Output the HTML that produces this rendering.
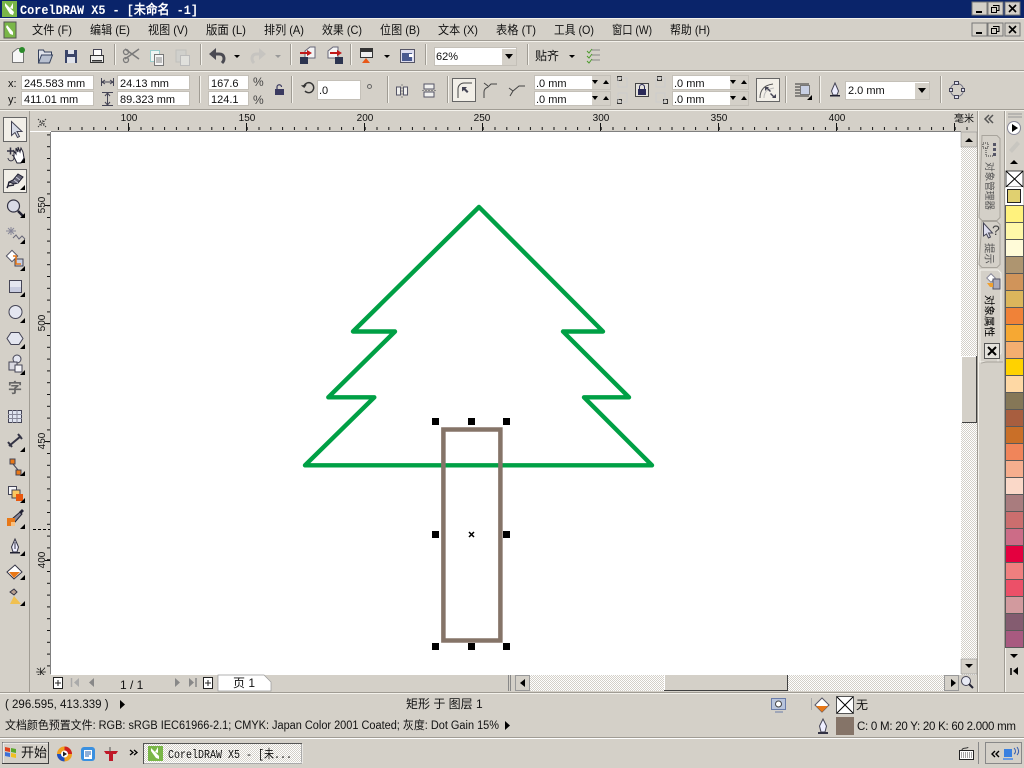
<!DOCTYPE html>
<html><head><meta charset="utf-8"><style>
html,body{margin:0;padding:0;width:1024px;height:768px;overflow:hidden;background:#d4d0c8}
svg{display:block;position:absolute;left:0;top:0}
text{font-family:"Liberation Sans","WenQuanYi Zen Hei","Noto Sans CJK SC",sans-serif;font-size:11px;fill:#111}
.m{font-size:12px;fill:#111}
.r{font-size:10px;text-anchor:middle;fill:#111}
.box{fill:#fff;stroke:#c4c0b8}
.sep{stroke:#a09c94;stroke-width:1}
.sepl{stroke:#f4f2ec;stroke-width:1}
.tb{fill:#000}
</style></head><body>
<svg width="1024" height="768" viewBox="0 0 1024 768" xmlns="http://www.w3.org/2000/svg">
<defs>
<pattern id="d" width="2" height="2" patternUnits="userSpaceOnUse"><rect width="2" height="2" fill="#fff"/><rect width="1" height="1" fill="#d4d0c8"/><rect x="1" y="1" width="1" height="1" fill="#d4d0c8"/></pattern>
<pattern id="hminor" x="128.7" y="112" width="11.8" height="20" patternUnits="userSpaceOnUse"><rect x="0" y="15" width="1" height="3" fill="#111"/></pattern>
<pattern id="vminor" x="30" y="205.2" width="21" height="11.8" patternUnits="userSpaceOnUse"><rect x="17" y="0" width="3" height="1" fill="#111"/></pattern>
</defs>
<rect width="1024" height="768" fill="#d4d0c8"/>

<!-- title bar -->
<rect width="1024" height="18" fill="#0a246a"/>
<rect x="2" y="1" width="15" height="16" fill="#7ab648"/>
<path d="M5 3l9 9-1 3-3-1-5-8z" fill="#fff"/><path d="M13 3l-3 5 3 1z" fill="#fff"/>
<text x="20" y="14" textLength="178" lengthAdjust="spacingAndGlyphs" style="font:bold 13px 'Liberation Mono','WenQuanYi Zen Hei',monospace;fill:#fff">CorelDRAW X5 - [未命名 -1]</text>
<g id="wb">
<rect x="972" y="2" width="15" height="13" fill="#d4d0c8" stroke="#777"/><rect x="976" y="11" width="6" height="2" fill="#000"/>
<rect x="988" y="2" width="15" height="13" fill="#d4d0c8" stroke="#777"/><path d="M993 5.500h6v5h-2M991.500 7.500h5v5h-5z" fill="none" stroke="#000"/>
<rect x="1005" y="2" width="15" height="13" fill="#d4d0c8" stroke="#777"/><path d="M1009 5l7 7M1016 5l-7 7" stroke="#000" stroke-width="1.6"/>
</g>
<use href="#wb" y="21"/>
<rect y="18" width="1024" height="1" fill="#f4f2ec"/>

<!-- menu -->
<rect x="4" y="22" width="12" height="16" fill="#7ab648" stroke="#555"/><path d="M7 25l6 7v3l-3-1-4-7z" fill="#fff"/>
<text class="m" x="32" y="34" textLength="40" lengthAdjust="spacingAndGlyphs">文件 (F)</text>
<text class="m" x="90" y="34" textLength="40" lengthAdjust="spacingAndGlyphs">编辑 (E)</text>
<text class="m" x="148" y="34" textLength="40" lengthAdjust="spacingAndGlyphs">视图 (V)</text>
<text class="m" x="206" y="34" textLength="40" lengthAdjust="spacingAndGlyphs">版面 (L)</text>
<text class="m" x="264" y="34" textLength="40" lengthAdjust="spacingAndGlyphs">排列 (A)</text>
<text class="m" x="322" y="34" textLength="40" lengthAdjust="spacingAndGlyphs">效果 (C)</text>
<text class="m" x="380" y="34" textLength="40" lengthAdjust="spacingAndGlyphs">位图 (B)</text>
<text class="m" x="438" y="34" textLength="40" lengthAdjust="spacingAndGlyphs">文本 (X)</text>
<text class="m" x="496" y="34" textLength="40" lengthAdjust="spacingAndGlyphs">表格 (T)</text>
<text class="m" x="554" y="34" textLength="40" lengthAdjust="spacingAndGlyphs">工具 (O)</text>
<text class="m" x="612" y="34" textLength="40" lengthAdjust="spacingAndGlyphs">窗口 (W)</text>
<text class="m" x="670" y="34" textLength="40" lengthAdjust="spacingAndGlyphs">帮助 (H)</text>
<rect y="40" width="1024" height="1" fill="#a09c94"/><rect y="41" width="1024" height="1" fill="#f4f2ec"/>

<!-- standard toolbar -->
<path d="M12.500 52.500l5-4h6v14h-11z" fill="#f6f6f6" stroke="#777"/><circle cx="22" cy="50" r="3" fill="#2a8a2a"/>
<path d="M38.500 63V50h5l1 2h7v3" fill="#dfe2ea" stroke="#34405c"/><path d="M38.500 63l3-8h11l-3 8z" fill="#b8c0d0" stroke="#34405c"/>
<rect x="65" y="50" width="12" height="13" fill="#3a4468"/><rect x="68" y="50" width="6" height="4" fill="#dfe2ea"/><rect x="67" y="57" width="8" height="6" fill="#dfe2ea"/>
<rect x="93.500" y="49.500" width="8" height="6" fill="#fff" stroke="#445"/><rect x="90.500" y="55.500" width="13" height="7" fill="#eee" stroke="#333"/><rect x="92" y="60" width="10" height="1.500" fill="#333"/>
<line class="sep" x1="114.500" y1="44" x2="114.500" y2="65"/><line class="sepl" x1="115.500" y1="44" x2="115.500" y2="65"/>
<path d="M125 49l14 10M139 49l-14 10" stroke="#7a7a7a" stroke-width="1.500" fill="none"/><circle cx="126" cy="52" r="2.500" fill="none" stroke="#7a7a7a" stroke-width="1.300"/><circle cx="126" cy="60" r="2.500" fill="none" stroke="#7a7a7a" stroke-width="1.300"/>
<rect x="150.500" y="50.500" width="9" height="11" fill="#eef4f2" stroke="#9cc"/><rect x="154.500" y="54.500" width="9" height="11" fill="#f4f4f4" stroke="#777"/><path d="M156 58h6M156 60h6M156 62h6" stroke="#888"/>
<rect x="176" y="50" width="10" height="12" fill="#d0d0cc" stroke="#c0c0bc"/><rect x="180.500" y="55.500" width="9" height="10" fill="#e0e0dc" stroke="#bbb"/>
<line class="sep" x1="200.500" y1="44" x2="200.500" y2="65"/><line class="sepl" x1="201.500" y1="44" x2="201.500" y2="65"/>
<path d="M222 63c3-3 3-9-3-9h-5" fill="none" stroke="#4a4a52" stroke-width="3"/><path d="M216 48l-7 6 7 6z" fill="#4a4a52"/>
<path d="M234 55h6l-3 3z" fill="#000"/>
<path d="M254 63c-3-3-3-9 3-9h4" fill="none" stroke="#c6c4c0" stroke-width="3"/><path d="M259 48l7 6-7 6z" fill="#c6c4c0"/>
<path d="M275 55h6l-3 3z" fill="#999"/>
<line class="sep" x1="290.500" y1="44" x2="290.500" y2="65"/><line class="sepl" x1="291.500" y1="44" x2="291.500" y2="65"/>
<path d="M305 51l5-4h5v11h-10z" fill="#f4f4f4" stroke="#667"/><rect x="300" y="57" width="8" height="7" fill="#2c3450"/><path d="M300 52h7v-2l5 3-5 3v-2h-7z" fill="#c01818"/>
<path d="M328 51l5-4h5v11h-10z" fill="#f4f4f4" stroke="#667"/><rect x="335" y="57" width="8" height="7" fill="#2c3450"/><path d="M330 52h7v-2l5 3-5 3v-2h-7z" fill="#c01818"/>
<line class="sep" x1="350.500" y1="44" x2="350.500" y2="65"/><line class="sepl" x1="351.500" y1="44" x2="351.500" y2="65"/>
<rect x="360.500" y="48.500" width="12" height="9" fill="#eee" stroke="#333"/><rect x="361" y="49" width="11" height="3" fill="#333"/><path d="M362 63l4-5 4 5z" fill="#e85818"/>
<path d="M384 55h6l-3 3z" fill="#000"/>
<rect x="400.500" y="49.500" width="14" height="13" fill="#dde" stroke="#556"/><rect x="402" y="53" width="10" height="8" fill="#4a5a90"/><rect x="409" y="54" width="4" height="3" fill="#fff"/>
<line class="sep" x1="425.500" y1="44" x2="425.500" y2="65"/><line class="sepl" x1="426.500" y1="44" x2="426.500" y2="65"/>
<rect class="box" x="434.500" y="47.500" width="82" height="18"/><rect x="502" y="49" width="14" height="16" fill="#d4d0c8"/><path d="M505 54h8l-4 5z" fill="#000"/>
<text x="436" y="60">62%</text>
<line class="sep" x1="527.500" y1="44" x2="527.500" y2="65"/><line class="sepl" x1="528.500" y1="44" x2="528.500" y2="65"/>
<text class="m" x="535" y="60">贴齐</text>
<path d="M569 55h6l-3 3z" fill="#000"/>
<path d="M592 50h8M592 55h8M592 60h8" stroke="#888"/><path d="M587 51l2 2 3-4M587 56l2 2 3-4M587 61l2 2 3-4" stroke="#4a9a2a" fill="none"/>
<rect y="70" width="1024" height="1" fill="#a09c94"/><rect y="71" width="1024" height="1" fill="#f4f2ec"/>

<!-- property bar -->
<text x="8" y="87">x:</text><text x="8" y="103">y:</text>
<rect class="box" x="21.500" y="75.500" width="72" height="14"/><rect class="box" x="21.500" y="91.500" width="72" height="14"/>
<text x="24" y="87">245.583 mm</text><text x="24" y="103">411.01 mm</text>
<path d="M101.500 78v8M113.500 78v8M102 82h11M105 80l-3 2 3 2M110 80l3 2-3 2" fill="none" stroke="#445"/>
<path d="M102 92.500h11M102 105.500h11M107.500 93v12M105 96l2.500-3 2.500 3M105 102l2.500 3 2.500-3" fill="none" stroke="#445"/>
<rect class="box" x="117.500" y="75.500" width="72" height="14"/><rect class="box" x="117.500" y="91.500" width="72" height="14"/>
<text x="120" y="87">24.13 mm</text><text x="120" y="103">89.323 mm</text>
<line class="sep" x1="199.500" y1="76" x2="199.500" y2="103"/><line class="sepl" x1="200.500" y1="76" x2="200.500" y2="103"/>
<rect class="box" x="208.500" y="75.500" width="40" height="14"/><rect class="box" x="208.500" y="91.500" width="40" height="14"/>
<text x="211" y="87">167.6</text><text x="211" y="103">124.1</text>
<text x="253" y="86" style="font-size:12px;fill:#444">%</text><text x="253" y="104" style="font-size:12px;fill:#444">%</text>
<rect x="275" y="89" width="9" height="6" fill="#3a3a60"/><path d="M277 89v-2a2.200 2.200 0 0 1 4.500 0" fill="none" stroke="#3a3a60" stroke-width="1.200"/>
<line class="sep" x1="291.500" y1="76" x2="291.500" y2="103"/><line class="sepl" x1="292.500" y1="76" x2="292.500" y2="103"/>
<path d="M304 86a5 5 0 1 1 1 5" fill="none" stroke="#333" stroke-width="1.400"/><path d="M301 85h6l-3 3z" fill="#333" transform="rotate(-10 304 86)"/>
<rect class="box" x="317.500" y="80.500" width="43" height="19"/><text x="319" y="94">.0</text>
<circle cx="369.500" cy="86.500" r="2" fill="none" stroke="#666"/>
<line class="sep" x1="387.500" y1="76" x2="387.500" y2="103"/><line class="sepl" x1="388.500" y1="76" x2="388.500" y2="103"/>
<path d="M396.500 87v8h4v-8zM403.500 87v8h4v-8z" fill="#f0f0ee" stroke="#556"/><path d="M402 84v14" stroke="#888" stroke-dasharray="2 1"/>
<path d="M424 84h10v5h-10zM424 92h10v5h-10z" fill="#f0f0ee" stroke="#556"/><path d="M422 90.500h15" stroke="#888" stroke-dasharray="2 1"/>
<line class="sep" x1="447.500" y1="76" x2="447.500" y2="103"/><line class="sepl" x1="448.500" y1="76" x2="448.500" y2="103"/>
<rect x="452.500" y="78.500" width="23" height="23" fill="#f2efe8" stroke="#666"/><path d="M458 98v-9a6 6 0 0 1 6-6h8" fill="none" stroke="#444"/><path d="M462 87h5l-1.500 1.500 3 3-1.500 1.500-3-3-2 1.500z" fill="#445"/>
<path d="M484 98v-6c0-3 2-4 4-5l3-3h6M484 83l4 3" fill="none" stroke="#444"/>
<path d="M510 96l3-5 6-5h6M513 91l-4-3" fill="none" stroke="#444"/>
<g id="sp"><rect class="box" x="534.500" y="75.500" width="76" height="14"/><rect x="592" y="76" width="18" height="13" fill="#d4d0c8"/><path d="M592 80h6l-3 4zM603 84h6l-3-4z" fill="#000"/></g>
<use href="#sp" y="16"/><text x="536" y="87">.0 mm</text><text x="536" y="103">.0 mm</text>
<rect x="617.500" y="76.500" width="4" height="4" fill="none" stroke="#333"/><rect x="617.500" y="99.500" width="4" height="4" fill="none" stroke="#333"/>
<rect x="618" y="78" width="9" height="9" fill="none" stroke="#ccc"/><rect x="618" y="93" width="9" height="9" fill="none" stroke="#ccc"/>
<rect x="635.500" y="83.500" width="13" height="13" fill="#e4e2dc" stroke="#444"/><rect x="638" y="89" width="8" height="6" fill="#2a2a58"/><path d="M639.500 89v-2a2.500 2.500 0 0 1 5 0v2" fill="none" stroke="#2a2a58"/>
<rect x="657.500" y="76.500" width="4" height="4" fill="none" stroke="#333"/><rect x="663.500" y="99.500" width="4" height="4" fill="none" stroke="#333"/>
<rect x="656" y="78" width="9" height="9" fill="none" stroke="#ccc"/><rect x="656" y="93" width="9" height="9" fill="none" stroke="#ccc"/>
<use href="#sp" x="138"/><use href="#sp" x="138" y="16"/><text x="674" y="87">.0 mm</text><text x="674" y="103">.0 mm</text>
<rect x="756.500" y="78.500" width="23" height="23" fill="#f2efe8" stroke="#666"/><path d="M760 98c0-9 5-13 13-14" fill="none" stroke="#555"/><path d="M764 98c0-6 3-9 10-10" fill="none" stroke="#bbb"/><path d="M765 87h4l-1 1 3 3-1 1-3-3-2 2zM776 98h-4l1-1-3-3 1-1 3 3 2-2z" fill="#445"/>
<line class="sep" x1="785.500" y1="76" x2="785.500" y2="103"/><line class="sepl" x1="786.500" y1="76" x2="786.500" y2="103"/>
<path d="M795 84h14M795 87h5M795 90h5M795 93h5M795 96h14" stroke="#333" fill="none"/><rect x="800.500" y="85.500" width="9" height="9" fill="#c8d0e4" stroke="#777"/><path d="M807 100l5-5v5z" fill="#000"/>
<line class="sep" x1="819.500" y1="76" x2="819.500" y2="103"/><line class="sepl" x1="820.500" y1="76" x2="820.500" y2="103"/>
<path d="M835 83l3.500 8-1.500 4h-4l-1.500-4z" fill="#eef" stroke="#445"/><rect x="830" y="95" width="10" height="1.500" fill="#223"/>
<rect class="box" x="845.500" y="81.500" width="84" height="18"/><rect x="915" y="83" width="14" height="16" fill="#d4d0c8"/><path d="M918 88h8l-4 5z" fill="#000"/>
<text x="848" y="94">2.0 mm</text>
<line class="sep" x1="940.500" y1="76" x2="940.500" y2="103"/><line class="sepl" x1="941.500" y1="76" x2="941.500" y2="103"/>
<circle cx="957" cy="90" r="6.500" fill="none" stroke="#778"/><g fill="#dde" stroke="#445"><rect x="954.500" y="81.500" width="4" height="3"/><rect x="954.500" y="95.500" width="4" height="3"/><rect x="949.500" y="88.500" width="3" height="3"/><rect x="961.500" y="88.500" width="3" height="3"/></g>
<rect y="109" width="1024" height="1" fill="#a09c94"/><rect y="110" width="1024" height="1" fill="#f4f2ec"/>

<!-- canvas area -->
<rect x="51" y="132" width="910" height="542" fill="#fff"/>

<!-- horizontal ruler -->
<rect x="51" y="112" width="926" height="20" fill="url(#hminor)"/>
<g fill="#111">
<rect x="128" y="123" width="1" height="8"/><rect x="246" y="123" width="1" height="8"/><rect x="364" y="123" width="1" height="8"/><rect x="482" y="123" width="1" height="8"/><rect x="600" y="123" width="1" height="8"/><rect x="718" y="123" width="1" height="8"/><rect x="836" y="123" width="1" height="8"/><rect x="954" y="123" width="1" height="8"/>
</g>
<rect x="29" y="131" width="22" height="1" fill="#fff"/>
<rect x="51" y="131" width="910" height="1" fill="#808080"/>
<text class="r" x="129" y="121">100</text><text class="r" x="247" y="121">150</text><text class="r" x="365" y="121">200</text><text class="r" x="482" y="121">250</text><text class="r" x="601" y="121">300</text><text class="r" x="719" y="121">350</text><text class="r" x="837" y="121">400</text>
<text class="r" x="964" y="122">毫米</text>
<path d="M38 119l8 8M46 119l-8 8" stroke="#333" stroke-dasharray="1.500 1"/><rect x="40" y="121" width="4" height="4" fill="none" stroke="#333" stroke-dasharray="1 1"/>

<!-- vertical ruler -->
<rect x="30" y="132" width="21" height="542" fill="url(#vminor)"/>
<g fill="#111"><rect x="45" y="205" width="5" height="1"/><rect x="45" y="323" width="5" height="1"/><rect x="45" y="441" width="5" height="1"/><rect x="45" y="560" width="5" height="1"/></g>
<rect x="50" y="132" width="1" height="542" fill="#808080"/>
<text class="r" transform="translate(45,205) rotate(-90)">550</text>
<text class="r" transform="translate(45,323) rotate(-90)">500</text>
<text class="r" transform="translate(45,441) rotate(-90)">450</text>
<text class="r" transform="translate(45,560) rotate(-90)">400</text>
<text class="r" transform="translate(45,677) rotate(-90)">毫米</text>
<path d="M33 529.500h17" stroke="#000" stroke-dasharray="3 2"/>
<rect x="29" y="111" width="1" height="582" fill="#a09c94"/>

<!-- toolbox -->
<rect x="3.500" y="117.500" width="23" height="24" fill="#f2efe8" stroke="#666"/>
<path d="M11.500 121.500v14l3.500-3 2.500 5 2-1-2.500-5h5z" fill="#d8dce8" stroke="#445"/>
<path d="M7 151h7M10.500 147.500v7" stroke="#334" stroke-width="1.500"/><path d="M8 158a3 3 0 1 0 4-3" fill="none" stroke="#334"/>
<path d="M14 151l2 3v-6l2 4v-5l2 5 1-4 2 4 1 6-3 5h-4l-3-6z" fill="#fff" stroke="#223"/>
<path d="M20 163h5v-5z" class="tb"/>
<rect x="3.500" y="169.500" width="23" height="23" fill="#f2efe8" stroke="#666"/>
<path d="M9 182l4-2 5-6 5 3-5 6-4 1z" fill="#667" stroke="#223"/><path d="M14 180l4 3M16 177l4 3" stroke="#ccd"/><path d="M9 182l-1 4 6-1M8 186l-1 2" fill="none" stroke="#223" stroke-width="1.500"/>
<path d="M20 190h5v-5z" class="tb"/>
<circle cx="13.500" cy="206" r="6" fill="#d8dae6" stroke="#334" stroke-width="1.200"/><path d="M18 211l5 5" stroke="#223" stroke-width="2.500"/><path d="M20 218h5v-5z" class="tb"/>
<path d="M8 228l6 6M14 228l-6 6M11 227v8M6 231h10" stroke="#889"/><path d="M13 238l3-3 3 4 3-3 3 3" fill="none" stroke="#667"/><path d="M20 244h5v-5z" class="tb"/>
<rect x="8" y="252" width="8" height="8" fill="#fff" stroke="#556" transform="rotate(45 12 256)"/><rect x="15" y="259" width="8" height="7" fill="#c8d0e4" stroke="#445"/><path d="M13 256h3v8h5" fill="none" stroke="#e87818" stroke-width="1.500"/><path d="M20 271h5v-5z" class="tb"/>
<rect x="9.500" y="280.500" width="12" height="12" fill="#e4e6f0" stroke="#445"/><rect x="10" y="287" width="11" height="5" fill="#c8cce0"/><path d="M20 297h5v-5z" class="tb"/>
<circle cx="15.500" cy="312" r="6.500" fill="#e4e6f0" stroke="#445"/><path d="M20 323h5v-5z" class="tb"/>
<path d="M11 332.500h8l4 6-4 6h-8l-4-6z" fill="#e4e6f0" stroke="#445"/><path d="M20 349h5v-5z" class="tb"/>
<circle cx="17" cy="359" r="4" fill="#e4e6f0" stroke="#445"/><rect x="9" y="362" width="8" height="8" fill="#d8d8e0" stroke="#445"/><rect x="15" y="365" width="7" height="7" fill="#f4f4f8" stroke="#445"/><path d="M20 375h5v-5z" class="tb"/>
<text x="8" y="393" style="font-size:14px;fill:#666;font-weight:bold">字</text>
<rect x="8.500" y="410.500" width="13" height="12" fill="#e0e4f0" stroke="#445"/><path d="M8 414.500h14M8 418.500h14M12.500 410v13M17 410v13" stroke="#889"/>
<path d="M9 446l12-10" stroke="#334" stroke-width="2"/><path d="M8 442l4 5M18 434l4 5" stroke="#334" stroke-width="2"/><path d="M20 452h5v-5z" class="tb"/>
<rect x="10" y="459" width="5" height="5" fill="#e87818" stroke="#445"/><rect x="16" y="470" width="5" height="5" fill="#e87818" stroke="#445"/><path d="M13 464l5 6" stroke="#445"/><path d="M20 476h5v-5z" class="tb"/>
<rect x="8.500" y="486.500" width="8" height="8" fill="#f4f4f8" stroke="#445"/><rect x="12" y="490" width="8" height="8" fill="#fbc860" stroke="#445"/><rect x="16" y="494" width="7" height="7" fill="#e85810"/><path d="M20 503h5v-5z" class="tb"/>
<path d="M12 519l8-7 2 2-7 8z" fill="#889" stroke="#223"/><path d="M19 512l3-3 2 2-3 3z" fill="#223"/><rect x="7" y="518" width="8" height="8" fill="#e87818"/><rect x="11" y="522" width="4" height="4" fill="#f8c080"/><path d="M20 529h5v-5z" class="tb"/>
<path d="M15 539l3.500 8-1.500 5h-4l-1.500-5z" fill="#eef" stroke="#334"/><path d="M15 542v7" stroke="#334"/><rect x="10" y="552" width="10" height="1.500" fill="#223"/><path d="M20 556h5v-5z" class="tb"/>
<path d="M7 572l8-7 7 7-8 7z" fill="#fff" stroke="#334"/><path d="M9 572h11l-6 6z" fill="#e87818"/><path d="M20 580h5v-5z" class="tb"/>
<path d="M10 592l4-3 3 3-3 3z" fill="#b8a090" stroke="#334"/><path d="M14 596l-4 8h11z" fill="#f0c050"/><path d="M20 606h5v-5z" class="tb"/>

<!-- right scrollbar -->
<rect x="961" y="132" width="16" height="543" fill="url(#d)"/>
<rect x="961" y="132" width="16" height="15" fill="#d4d0c8" stroke="#888" stroke-width=".5"/><path d="M965 142h8l-4-4z" fill="#000"/>
<rect x="961" y="356" width="15" height="67" fill="#d4d0c8"/><path d="M961 422.500h15.500V356" fill="none" stroke="#404040"/><path d="M961.500 423V356.500H976" fill="none" stroke="#fff"/>
<rect x="961" y="659" width="16" height="15" fill="#d4d0c8" stroke="#888" stroke-width=".5"/><path d="M965 664h8l-4 4z" fill="#000"/>
<rect x="977" y="111" width="1" height="582" fill="#a09c94"/><rect x="978" y="111" width="1" height="582" fill="#f4f2ec"/>

<!-- docker -->
<path d="M992 115l-4 4 4 4M988 115l-4 4 4 4" transform="translate(1,0)" fill="none" stroke="#555" stroke-width="1.500"/>
<path d="M982 135.500h15l3 3v79l-3 3h-15l-3-3z" fill="#d4d0c8" stroke="#a8a49c"/>
<path d="M982 221.500h15l3 3v40l-3 3h-15l-3-3z" fill="#d4d0c8" stroke="#a8a49c"/>
<path d="M980 270h18l3 3v80l-3 4v5h-18z" fill="#d4d0c8" stroke="#f4f2ec"/>
<path d="M981 363c2 0 3-1 6-1h16" fill="none" stroke="#a8a49c"/>
<rect x="983" y="143" width="5" height="5" fill="none" stroke="#333" stroke-dasharray="1 1"/><rect x="993" y="143" width="3" height="3" fill="#556"/><rect x="993" y="148" width="3" height="3" fill="#556"/><rect x="993" y="153" width="3" height="3" fill="#556"/><path d="M986 148v8h7" stroke="#333" fill="none" stroke-dasharray="1 1"/>
<text transform="translate(986,162) rotate(90)" style="font-size:10px;fill:#555" textLength="48" lengthAdjust="spacingAndGlyphs">对象管理器</text>
<path d="M983.500 223v13l3-2 2 4 2-1-2-4h4z" fill="#dde" stroke="#445"/><text x="992" y="235" style="font-size:14px;fill:#444;font-family:'Liberation Sans'">?</text>
<text transform="translate(986,243) rotate(90)" style="font-size:10.500px;fill:#555">提示</text>
<rect x="988" y="275" width="6" height="6" fill="#fff" stroke="#889" transform="rotate(45 991 278)"/><rect x="993" y="279" width="7" height="10" fill="#aab" stroke="#556"/><path d="M987 283h6v4h-3z" fill="#f0a030"/>
<text transform="translate(986,295) rotate(90)" style="font-size:10.500px;fill:#000">对象属性</text>
<rect x="984.500" y="343.500" width="15" height="15" fill="#e4e2dc" stroke="#555"/><path d="M988 347l8 8M996 347l-8 8" stroke="#000" stroke-width="2"/>

<!-- palette column -->
<rect x="1004" y="111" width="1" height="582" fill="#a09c94"/><rect x="1005" y="111" width="1" height="582" fill="#f4f2ec"/>
<path d="M1008 114h14M1008 117h14" stroke="#999"/>
<circle cx="1014" cy="128" r="6.500" fill="#fff" stroke="#889"/><path d="M1012 124l6 4-6 4z" fill="#000"/>
<path d="M1009 150l8-9 3 3-8 9z" fill="#c8c6c0"/>
<path d="M1010 164h8l-4-4z" fill="#000"/>
<rect x="1006" y="171" width="17" height="16" fill="#fff" stroke="#444"/><path d="M1006 171l17 16M1023 171l-17 16" stroke="#000"/>
<rect x="1006" y="187" width="17" height="18" fill="#fff"/><rect x="1007.500" y="189.500" width="13" height="13" fill="#e0d070" stroke="#222"/>
<g stroke="#5a5a5a" stroke-width="1">
<rect x="1005.500" y="205.500" width="18" height="17" fill="#fff27d"/>
<rect x="1005.500" y="222.500" width="18" height="17" fill="#fff8a8"/>
<rect x="1005.500" y="239.500" width="18" height="17" fill="#fffbd8"/>
<rect x="1005.500" y="256.500" width="18" height="17" fill="#ae9570"/>
<rect x="1005.500" y="273.500" width="18" height="17" fill="#d0945a"/>
<rect x="1005.500" y="290.500" width="18" height="17" fill="#dcb65c"/>
<rect x="1005.500" y="307.500" width="18" height="17" fill="#f08238"/>
<rect x="1005.500" y="324.500" width="18" height="17" fill="#f6a833"/>
<rect x="1005.500" y="341.500" width="18" height="17" fill="#f4ae70"/>
<rect x="1005.500" y="358.500" width="18" height="17" fill="#ffd200"/>
<rect x="1005.500" y="375.500" width="18" height="17" fill="#fed8a4"/>
<rect x="1005.500" y="392.500" width="18" height="17" fill="#857757"/>
<rect x="1005.500" y="409.500" width="18" height="17" fill="#a85e3f"/>
<rect x="1005.500" y="426.500" width="18" height="17" fill="#c96f28"/>
<rect x="1005.500" y="443.500" width="18" height="17" fill="#f0855a"/>
<rect x="1005.500" y="460.500" width="18" height="17" fill="#f6ae8e"/>
<rect x="1005.500" y="477.500" width="18" height="17" fill="#fad8c8"/>
<rect x="1005.500" y="494.500" width="18" height="17" fill="#a97c7e"/>
<rect x="1005.500" y="511.500" width="18" height="17" fill="#cb6e6e"/>
<rect x="1005.500" y="528.500" width="18" height="17" fill="#cc6c87"/>
<rect x="1005.500" y="545.500" width="18" height="17" fill="#e4003f"/>
<rect x="1005.500" y="562.500" width="18" height="17" fill="#f07f7f"/>
<rect x="1005.500" y="579.500" width="18" height="17" fill="#ec5068"/>
<rect x="1005.500" y="596.500" width="18" height="17" fill="#d29a9e"/>
<rect x="1005.500" y="613.500" width="18" height="17" fill="#845c70"/>
<rect x="1005.500" y="630.500" width="18" height="17" fill="#a85a80"/>
</g>
<path d="M1010 654h8l-4 4z" fill="#000"/>
<path d="M1011 668v7" stroke="#000" stroke-width="1.500"/><path d="M1018 667v8l-5-4z" fill="#000"/>

<!-- tree -->
<path d="M479 207L603 331.500H563L629 397.300H584L652 465.300H305L374.300 397.300H328.300L395 331.500H353Z" fill="none" stroke="#00a045" stroke-width="4.400" stroke-linejoin="round"/>
<rect x="443.400" y="429.500" width="57" height="211" fill="none" stroke="#857468" stroke-width="4.500"/>
<g fill="#000">
<rect x="432" y="418" width="7" height="7"/><rect x="468" y="418" width="7" height="7"/><rect x="503" y="418" width="7" height="7"/>
<rect x="432" y="531" width="7" height="7"/><rect x="503" y="531" width="7" height="7"/>
<rect x="432" y="643" width="7" height="7"/><rect x="468" y="643" width="7" height="7"/><rect x="503" y="643" width="7" height="7"/>
</g>
<path d="M469 532l5 5M474 532l-5 5" stroke="#000" stroke-width="1.500"/>

<!-- bottom page bar -->
<rect x="30" y="675" width="930" height="17" fill="#d4d0c8"/>
<rect x="51" y="674" width="910" height="1" fill="#fff"/>
<rect x="53.500" y="677.500" width="9" height="11" fill="#fff" stroke="#222"/><path d="M55 683h6M58 680v6" stroke="#222"/>
<path d="M71.500 678v9" stroke="#aaa" stroke-width="1.500"/><path d="M79 678v9l-5-4.500z" fill="#aaa"/>
<path d="M94 678v9l-5-4.500z" fill="#888"/>
<text x="120" y="689" style="font-size:12px">1 / 1</text>
<path d="M175 678v9l5 -4.500z" fill="#888"/>
<path d="M189 678v9l5-4.500z" fill="#888"/><path d="M196 678v9" stroke="#888" stroke-width="1.500"/>
<rect x="203.500" y="677.500" width="9" height="11" fill="#fff" stroke="#222"/><path d="M205 683h6M208 680v6" stroke="#222"/>
<path d="M218 675h46l7 7v9h-53z" fill="#fff" stroke="#999" stroke-width=".7"/>
<text x="233" y="687" style="font-size:12px">页 1</text>
<rect x="508" y="675" width="1" height="16" fill="#888"/>
<rect x="510" y="675" width="1" height="16" fill="#888"/>
<rect x="515.500" y="675.500" width="14" height="15" fill="#d4d0c8" stroke="#999"/><path d="M525 679v8l-5-4z" fill="#000"/>
<rect x="530" y="675" width="414" height="16" fill="url(#d)"/>
<rect x="664" y="675" width="124" height="15" fill="#d4d0c8"/><path d="M664 690.500h123.500V675" fill="none" stroke="#404040"/><path d="M664.500 690V675" stroke="#fff"/>
<rect x="944.500" y="675.500" width="14" height="15" fill="#d4d0c8" stroke="#999"/><path d="M951 679v8l5-4z" fill="#000"/>
<circle cx="966" cy="681" r="4.500" fill="#e8eaf4" stroke="#445"/><path d="M969 684l4 4" stroke="#223" stroke-width="2"/>

<rect y="692" width="1024" height="1" fill="#a09c94"/><rect y="693" width="1024" height="1" fill="#f4f2ec"/>

<!-- status -->
<text x="5" y="708" style="font-size:11.500px">( 296.595, 413.339 )</text>
<path d="M120 700v9l5-4.500z" fill="#000"/>
<text x="406" y="708" style="font-size:12px">矩形 于 图层 1</text>
<text x="5" y="729" style="font-size:11.500px" textLength="494" lengthAdjust="spacingAndGlyphs">文档颜色预置文件: RGB: sRGB IEC61966-2.1; CMYK: Japan Color 2001 Coated; 灰度: Dot Gain 15%</text>
<path d="M505 721v9l5-4.500z" fill="#000"/>
<rect x="771.500" y="698.500" width="14" height="11" fill="#b8c4dc" stroke="#6a7ca8"/><circle cx="778.500" cy="704" r="3" fill="#fff" stroke="#444"/><path d="M775 712h8" stroke="#6a7ca8"/>
<path d="M811.500 698v12" stroke="#aaa"/>
<path d="M815 705l7-7 7 7-7 7z" fill="#fff" stroke="#556"/><path d="M816 706h12l-6 6z" fill="#e87818"/>
<rect x="836.500" y="696.500" width="17" height="17" fill="#fff" stroke="#555"/><path d="M837 697l16 16M853 697l-16 16" stroke="#000"/>
<text x="856" y="709" style="font-size:12px">无</text>
<path d="M823 719l3.500 7-1.500 6h-4l-1.500-6z" fill="#eef" stroke="#445"/><rect x="818" y="732" width="10" height="2" fill="#334"/>
<rect x="836" y="717" width="18" height="18" fill="#857468"/>
<text x="857" y="730" textLength="159" lengthAdjust="spacing" style="font-size:11.500px">C: 0 M: 20 Y: 20 K: 60  2.000 mm</text>
<rect y="737" width="1024" height="1" fill="#a09c94"/><rect y="738" width="1024" height="1" fill="#fff"/>

<!-- taskbar -->
<rect x="2.500" y="742.500" width="46" height="21" fill="#d4d0c8" stroke="#404040"/><path d="M3 763V743h45" stroke="#fff" fill="none"/>
<path d="M5 747l5 1v4l-5-1z" fill="#e0401c"/><path d="M11 748l5 1v4l-5-1z" fill="#5aa82a"/><path d="M5 752l5 1v4l-5-1z" fill="#3c70d8"/><path d="M11 753l5 1v4l-5-1z" fill="#f0c020"/>
<text x="21" y="757" style="font-size:13px">开始</text>
<circle cx="64.500" cy="754" r="7.500" fill="#f0a020"/><path d="M64.500 746.500a7.500 7.500 0 0 1 7.500 7.500h-7.500z" fill="#d02020"/><path d="M64.500 754v7.500a7.500 7.500 0 0 1-7.500-7.500z" fill="#2050c0"/><circle cx="64.500" cy="754" r="3.500" fill="#fff"/><path d="M63 751.500l4 2.500-4 2.500z" fill="#222"/>
<rect x="81" y="747" width="14" height="14" rx="3" fill="#3a90e0"/><rect x="84" y="750" width="8" height="9" fill="#fff"/><path d="M85 752h6M85 754h6M85 756h4" stroke="#2060b0"/>
<path d="M104 751h14l-2 3h-3v7h-4v-7h-3z" fill="#c01828"/><path d="M110 747v5" stroke="#555"/>
<path d="M130 750l3 2.500-3 2.500M134 750l3 2.500-3 2.500" fill="none" stroke="#000" stroke-width="1.300"/>
<rect x="143.500" y="743.500" width="158" height="20" fill="url(#d)" stroke="#555"/><path d="M144 763h158V744" fill="none" stroke="#fff"/>
<rect x="148" y="746" width="15" height="15" fill="#7ab648"/><path d="M151 748l8 8v3l-3-1-5-7z" fill="#fff"/><path d="M158 747v6l-3-1z" fill="#fff"/>
<text x="168" y="758" textLength="124" lengthAdjust="spacingAndGlyphs" style="font:12px 'Liberation Mono','WenQuanYi Zen Hei',monospace">CorelDRAW X5 - [未...</text>
<rect x="959.500" y="750.500" width="14" height="9" fill="#fff" stroke="#222"/><path d="M961 753h11M961 755h11M961 757h11" stroke="#444" stroke-dasharray="1 1"/><path d="M962 750c0-3 6-1 6-3" stroke="#333" fill="none"/>
<path d="M978.500 742v22" stroke="#888"/>
<rect x="985.500" y="742.500" width="36" height="21" fill="none" stroke="#888"/>
<path d="M995 751l-3 3 3 3M999 751l-3 3 3 3" fill="none" stroke="#000" stroke-width="1.400"/>
<rect x="1004" y="749" width="8" height="8" fill="#3a80e0"/><path d="M1003 759h10" stroke="#6a9ae0" stroke-width="2"/><path d="M1014 748c2 2 2 5 0 6M1017 747c2 3 2 6 0 8" stroke="#3a60b0" fill="none"/>
</svg>
</body></html>
